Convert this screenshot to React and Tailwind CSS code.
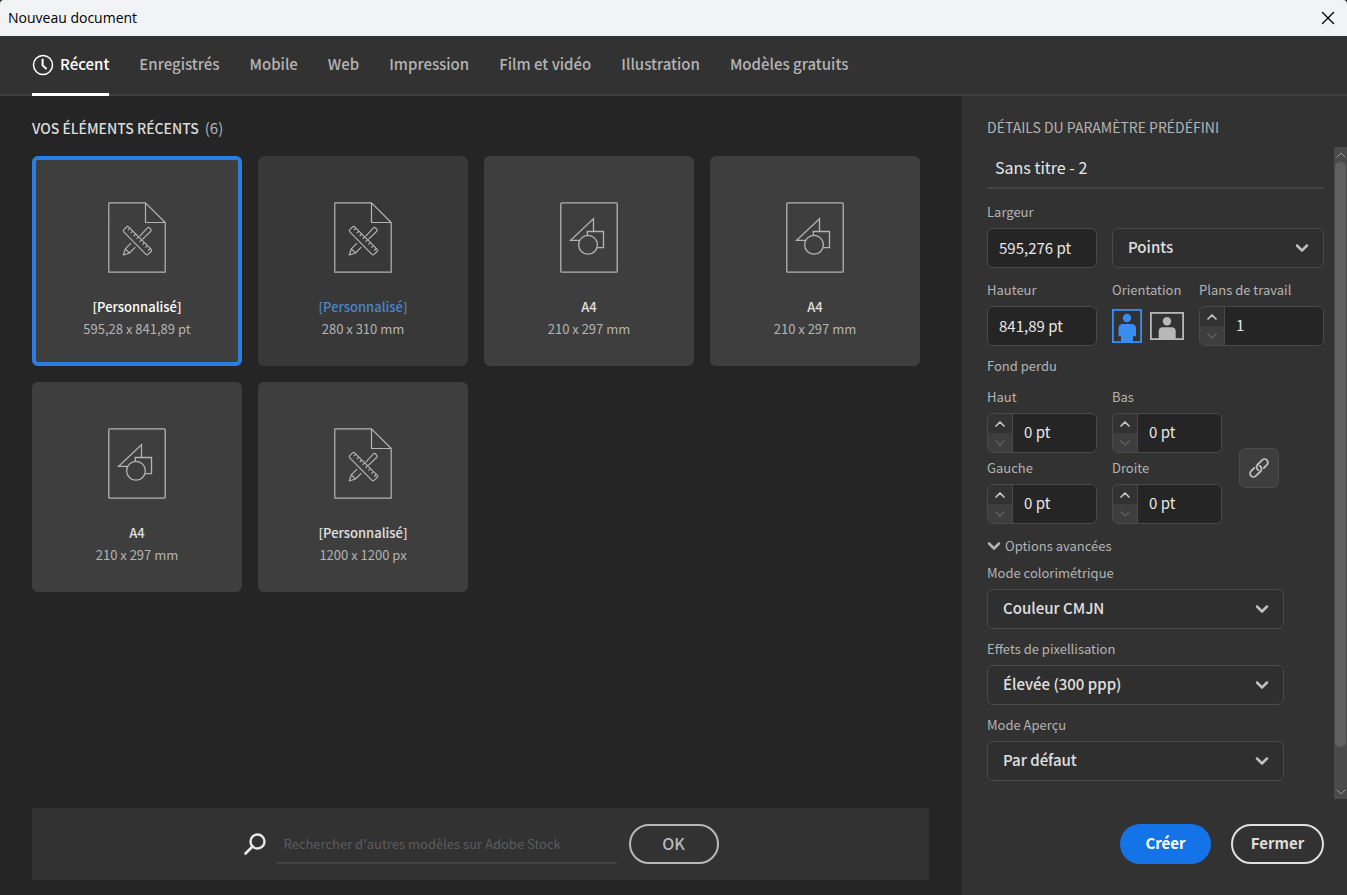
import { useState } from "react";
import { ChevronDown, ChevronUp, X } from "lucide-react";

const tabs = [
  "Récent",
  "Enregistrés",
  "Mobile",
  "Web",
  "Impression",
  "Film et vidéo",
  "Illustration",
  "Modèles gratuits",
];

const recentItems = [
  { id: 1, name: "[Personnalisé]", size: "595,28 x 841,89 pt", custom: true },
  { id: 2, name: "[Personnalisé]", size: "280 x 310 mm", custom: true, hovered: true },
  { id: 3, name: "A4", size: "210 x 297 mm" },
  { id: 4, name: "A4", size: "210 x 297 mm" },
  { id: 5, name: "A4", size: "210 x 297 mm" },
  { id: 6, name: "[Personnalisé]", size: "1200 x 1200 px", custom: true },
];

const ClockIcon = () => (
  <svg width="22" height="22" viewBox="0 0 22 22" fill="none" stroke="currentColor">
    <circle cx="11" cy="11" r="9.5" strokeWidth="1.5" />
    <path d="M10.6 4.8V11.4L14.6 15" strokeWidth="2" />
  </svg>
);

const SearchIcon = () => (
  <svg width="24" height="24" viewBox="0 0 24 24" fill="none" stroke="currentColor">
    <circle cx="14.5" cy="9.5" r="7" strokeWidth="2.4" />
    <path d="M9.5 14.5L2.5 21.5" strokeWidth="2.6" strokeLinecap="round" />
  </svg>
);

// page with a folded corner, ruler and pencil
const CustomDocIcon = () => (
  <svg width="58" height="71" viewBox="0 0 58 71" fill="none" stroke="currentColor" strokeWidth="1.2" strokeLinejoin="round">
    <path d="M37.5 0.8H0.8V70.2H57.2V20.5L37.5 0.8V20.5H57.2" />
    <path d="M15.8 27.7L18.6 24.9Q19.6 24 20.6 24.9L43.3 47.4Q44.2 48.4 43.3 49.3L40 52.4Q39 53.2 38 52.3L15.8 29.8Q14.9 28.7 15.8 27.7Z" />
    <path d="M21.9 26.2L19.9 28.2M24.8 29.1L22.8 31.1M27.7 32L25.7 34M30.6 34.9L28.6 36.9M33.5 37.8L31.5 39.8M36.4 40.7L34.4 42.7M39.3 43.6L37.3 45.6M42.2 46.5L40.2 48.5" />
    <path d="M31.6 34.4L39.6 25.7Q40.5 25 41.4 25.8L42.8 27.3Q43.6 28.3 42.8 29.2L34.4 37.4" />
    <path d="M23 41.2L17.3 46.9L15.3 53L21.5 51L27.3 45.2M17.3 46.9L21.5 51" />
  </svg>
);

const PresetIcon = () => (
  <svg width="58" height="71" viewBox="0 0 58 71" fill="none" stroke="currentColor" strokeWidth="1.3">
    <rect x="0.8" y="0.8" width="56.4" height="69.4" rx="1" />
    <path d="M33.5 29.3V16.8L10.6 38.3H19.6" />
    <path d="M27.3 33.4V29.5H43.5V45.7H37.3" />
    <circle cx="28" cy="42.8" r="9.4" />
  </svg>
);

const PortraitIcon = () => (
  <svg width="30" height="34" viewBox="0 0 30 34">
    <rect x="0.9" y="0.9" width="28.2" height="32.2" fill="none" stroke="currentColor" strokeWidth="1.8" />
    <circle cx="15" cy="9" r="4.2" fill="currentColor" />
    <path d="M11 15H19.5Q24 15 24 19.5V27.3H21V33H9V27.3H6.5V19.5Q6.5 15 11 15Z" fill="currentColor" />
  </svg>
);

const LandscapeIcon = () => (
  <svg width="34" height="28" viewBox="0 0 34 28">
    <rect x="0.9" y="0.9" width="32.2" height="26.2" fill="none" stroke="currentColor" strokeWidth="1.8" />
    <circle cx="17" cy="9.2" r="4.2" fill="currentColor" />
    <path d="M13 15.3H21.5Q25.7 15.3 25.7 19.5V27H8.7V19.5Q8.7 15.3 13 15.3Z" fill="currentColor" />
  </svg>
);

const ChainIcon = () => (
  <svg width="22" height="22" viewBox="0 0 22 22" fill="none" stroke="currentColor" strokeWidth="1.8" strokeLinecap="round">
    <g transform="rotate(-45 11 11)">
      <path d="M7.6 7.6H3.2A3.4 3.4 0 0 0 3.2 14.4H9.8A3.4 3.4 0 0 0 13 10" />
      <path d="M14.4 14.4H18.8A3.4 3.4 0 0 0 18.8 7.6H12.2A3.4 3.4 0 0 0 9 12" />
    </g>
  </svg>
);

const labelClass = "block text-[13px] leading-5 text-[#b4b4b4]";
const inputClass = "min-w-0 bg-[#252525] pb-0.5 text-[15px] text-[#e8e8e8] outline-none";

const DocumentCard = ({ item, selected, onSelect }) => (
  <button
    onClick={onSelect}
    className={`h-[210px] rounded-md pt-[46px] flex flex-col items-center text-[13px] ${
      selected ? "outline-4 -outline-offset-4 outline-[#2a7de1]" : ""
    } ${item.hovered ? "bg-[#383838]" : "bg-[#3e3e3e]"}`}
  >
    <span className="text-[#b4b4b4]">{item.custom ? <CustomDocIcon /> : <PresetIcon />}</span>
    <span
      className={`mt-[22px] leading-6 font-medium ${
        item.hovered ? "text-[#4b86cb]" : selected ? "text-white" : "text-[#e0e0e0]"
      }`}
    >
      {item.name}
    </span>
    <span className="leading-5 text-[#b4b4b4]">{item.size}</span>
  </button>
);

const Stepper = ({ id, label, value, className }) => (
  <div className={className}>
    <label htmlFor={id} className={labelClass}>{label}</label>
    <div className="mt-1.5 h-10 flex rounded-md border border-[#4a4a4a] overflow-hidden">
      <div className="w-[25px] shrink-0 flex flex-col border-r border-[#4a4a4a]">
        <button aria-label={`${label} : augmenter`} className="flex-1 flex items-center justify-center text-[#c8c8c8]">
          <ChevronUp size={16} strokeWidth={2.5} />
        </button>
        <button aria-label={`${label} : diminuer`} className="flex-1 flex items-center justify-center bg-[#3e3e3e] text-[#5c5c5c]">
          <ChevronDown size={16} strokeWidth={2.5} />
        </button>
      </div>
      <input id={id} defaultValue={value} className={`${inputClass} flex-1 w-full px-[11px]`} />
    </div>
  </div>
);

const SelectBox = ({ id, label, value, className }) => (
  <div className={`relative h-10 ${className}`}>
    <select
      id={id}
      aria-label={label}
      defaultValue={value}
      className="w-full h-full appearance-none rounded-md border border-[#4a4a4a] bg-[#2f2f2f] pl-[15px] pr-10 pb-0.5 text-[15px] font-medium text-[#e0e0e0] outline-none"
    >
      <option>{value}</option>
    </select>
    <ChevronDown size={20} strokeWidth={3} className="absolute right-3 top-2.5 text-[#c0c0c0] pointer-events-none" />
  </div>
);

const LabeledSelect = ({ id, label, value }) => (
  <div className="w-[297px]">
    <label htmlFor={id} className={labelClass}>{label}</label>
    <SelectBox id={id} value={value} className="mt-1.5" />
  </div>
);

const App = () => {
  const [activeTab, setActiveTab] = useState("Récent");
  const [selectedId, setSelectedId] = useState(1);
  const [orientation, setOrientation] = useState("portrait");

  return (
    <div className="min-h-screen flex flex-col bg-[#323232] font-['Noto_Sans_CJK_JP',sans-serif]">
      {/* Title bar */}
      <div className="bg-[#2a2a2a]">
        <div className="h-9 px-2 flex items-center justify-between bg-[#f2f3f5] rounded-t-[4px] text-black">
          <h1 className="text-sm font-['Open_Sans',sans-serif]">Nouveau document</h1>
          <button aria-label="Fermer la fenêtre">
            <X size={22} strokeWidth={1.5} />
          </button>
        </div>
      </div>

      {/* Tabs */}
      <nav className="h-[60px] px-8 flex gap-[30px] border-b-2 border-[#404040]">
        {tabs.map((tab) => (
          <button
            key={tab}
            onClick={() => setActiveTab(tab)}
            className={`h-[60px] shrink-0 flex items-center gap-1.5 border-b-3 text-[15px] font-medium ${
              tab === activeTab ? "border-white text-white" : "border-transparent text-[#b4b4b4]"
            }`}
          >
            {tab === "Récent" && <ClockIcon />}
            {tab}
          </button>
        ))}
      </nav>

      <div className="flex-1 flex">
        {/* Recent documents */}
        <main className="flex-1 min-w-0 flex flex-col bg-[#252525] px-8 pt-5 pb-[15px]">
          <h2 className="flex gap-1.5 text-sm leading-6 font-medium text-[#dcdcdc]">
            VOS ÉLÉMENTS RÉCENTS <span className="text-[15px] font-normal text-[#b4b4b4]">(6)</span>
          </h2>
          <div className="mt-4 grid grid-cols-[repeat(auto-fill,210px)] gap-4">
            {recentItems.map((item) => (
              <DocumentCard
                key={item.id}
                item={item}
                selected={item.id === selectedId}
                onSelect={() => setSelectedId(item.id)}
              />
            ))}
          </div>

          <form className="mt-auto h-[72px] flex items-center justify-center bg-[#323232]">
            <span className="text-[#e8e8e8]"><SearchIcon /></span>
            <input
              aria-label="Rechercher sur Adobe Stock"
              placeholder="Rechercher d'autres modèles sur Adobe Stock"
              className="ml-2.5 mr-3 w-[340px] h-10 px-[7px] border-b-2 border-[#434343] text-[13px] text-white placeholder:text-[#5c5c5c] outline-none"
            />
            <button type="button" className="w-[90px] h-10 pb-0.5 rounded-full border-2 border-[#b8b8b8] text-base font-medium text-[#b8b8b8]">
              OK
            </button>
          </form>
        </main>

        {/* Preset details */}
        <aside className="w-[386px] shrink-0 flex flex-col border-l border-[#2d2d2d]">
          <h2 className="pl-[25px] pt-[21px] pb-2.5 text-sm leading-5 text-[#b4b4b4]">
            DÉTAILS DU PARAMÈTRE PRÉDÉFINI
          </h2>
          <div className="flex-1 flex">
            <div className="flex-1 pl-[25px] pr-2.5">
              <input
                aria-label="Nom du document"
                defaultValue="Sans titre - 2"
                className="w-full h-[42px] px-2 border-b-2 border-[#434343] text-base text-[#e8e8e8] outline-none"
              />

              <label htmlFor="width" className={`${labelClass} mt-[13px]`}>Largeur</label>
              <div className="mt-1.5 flex gap-[15px]">
                <input id="width" defaultValue="595,276 pt" className={`${inputClass} w-[110px] h-10 px-[11px] rounded-md border border-[#4a4a4a]`} />
                <SelectBox id="units" label="Unité" value="Points" className="flex-1" />
              </div>

              <div className="mt-3 flex">
                <div className="w-[110px] mr-[15px]">
                  <label htmlFor="height" className={labelClass}>Hauteur</label>
                  <input id="height" defaultValue="841,89 pt" className={`${inputClass} mt-1.5 w-full h-10 px-[11px] rounded-md border border-[#4a4a4a]`} />
                </div>
                <div className="flex-1">
                  <span className={labelClass}>Orientation</span>
                  <div className="mt-1.5 h-10 flex items-center gap-2">
                    <button
                      aria-label="Portrait"
                      onClick={() => setOrientation("portrait")}
                      className={orientation === "portrait" ? "text-[#378ef0]" : "text-[#b8b8b8]"}
                    >
                      <PortraitIcon />
                    </button>
                    <button
                      aria-label="Paysage"
                      onClick={() => setOrientation("landscape")}
                      className={orientation === "landscape" ? "text-[#378ef0]" : "text-[#b8b8b8]"}
                    >
                      <LandscapeIcon />
                    </button>
                  </div>
                </div>
                <Stepper id="artboards" label="Plans de travail" value="1" className="w-[125px]" />
              </div>

              <h3 className={`${labelClass} mt-2.5`}>Fond perdu</h3>
              <div className="mt-[11px] flex items-center gap-[17px]">
                <div className="grid grid-cols-[110px_110px] gap-x-[15px] gap-y-[5px]">
                  <Stepper id="bleed-top" label="Haut" value="0 pt" />
                  <Stepper id="bleed-bottom" label="Bas" value="0 pt" />
                  <Stepper id="bleed-left" label="Gauche" value="0 pt" />
                  <Stepper id="bleed-right" label="Droite" value="0 pt" />
                </div>
                <div className="pt-6">
                  <button aria-label="Lier les valeurs" className="size-10 flex items-center justify-center rounded-md border border-[#4a4a4a] bg-[#3e3e3e] text-[#c0c0c0]">
                    <ChainIcon />
                  </button>
                </div>
              </div>

              <button className="-ml-[3px] mt-3 flex items-center gap-px text-[13px] leading-5 text-[#b4b4b4]">
                <ChevronDown size={20} strokeWidth={3} />
                Options avancées
              </button>
              <div className="mt-[7px] flex flex-col gap-2.5">
                <LabeledSelect id="color-mode" label="Mode colorimétrique" value="Couleur CMJN" />
                <LabeledSelect id="raster" label="Effets de pixellisation" value="Élevée (300 ppp)" />
                <LabeledSelect id="preview" label="Mode Aperçu" value="Par défaut" />
              </div>
            </div>

            {/* Scrollbar */}
            <div className="w-[13px] flex flex-col items-center bg-[#4a4a4a] text-[#9a9a9a]">
              <span className="h-[15px] flex items-center"><ChevronUp size={16} strokeWidth={1.5} /></span>
              <div className="flex-1 w-full px-px">
                <div className="h-[94%] rounded-full bg-[#606060]" />
              </div>
              <span className="h-[15px] flex items-center"><ChevronDown size={16} strokeWidth={1.5} /></span>
            </div>
          </div>

          <div className="h-24 pt-[25px] pr-[23px] flex justify-end gap-5">
            <button className="w-[91px] h-10 pb-0.5 rounded-full bg-[#1473e6] text-[15px] font-bold text-white">Créer</button>
            <button className="w-[93px] h-10 pb-0.5 rounded-full border-2 border-[#e0e0e0] text-[15px] font-bold text-[#dcdcdc]">Fermer</button>
          </div>
        </aside>
      </div>
    </div>
  );
};

export default App;
